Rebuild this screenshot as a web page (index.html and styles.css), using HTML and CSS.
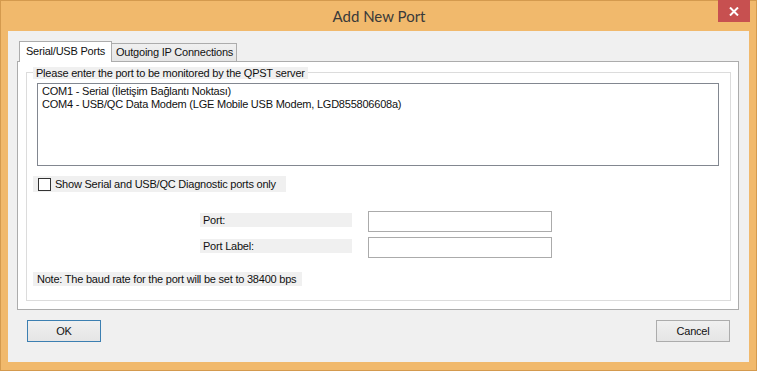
FILE: index.html
```html
<!DOCTYPE html>
<html>
<head>
<meta charset="utf-8">
<title>Add New Port</title>
<link rel="stylesheet" href="styles.css">
</head>
<body>
<div class="window">
  <div class="titlebar">
    <span class="title">Add New Port</span>
    <div class="close"><svg width="10" height="9" viewBox="0 0 10 9"><path d="M1 0.5 L9 8.5 M9 0.5 L1 8.5" stroke="#fff" stroke-width="2"/></svg></div>
  </div>
  <div class="client">
    <div class="tabs">
      <div class="tabstrip">
        <div class="tab active">Serial/USB Ports</div>
        <div class="tab">Outgoing IP Connections</div>
      </div>
      <div class="panel">
        <div class="group">
          <div class="legend">Please enter the port to be monitored by the QPST server</div>
          <div class="list">
            <div class="item">COM1 - Serial (İletişim Bağlantı Noktası)</div>
            <div class="item">COM4 - USB/QC Data Modem (LGE Mobile USB Modem, LGD855806608a)</div>
          </div>
          <div class="check-row">
            <span class="box"></span>
            <span class="check-label">Show Serial and USB/QC Diagnostic ports only</span>
          </div>
          <div class="field-row first">
            <span class="field-label">Port:</span>
            <span class="input"></span>
          </div>
          <div class="field-row">
            <span class="field-label">Port Label:</span>
            <span class="input"></span>
          </div>
          <div class="note">Note: The baud rate for the port will be set to 38400 bps</div>
        </div>
      </div>
    </div>
    <div class="buttons">
      <div class="btn default">OK</div>
      <div class="btn">Cancel</div>
    </div>
  </div>
</div>
</body>
</html>
```
FILE: styles.css
```css
* { box-sizing: border-box; }
html, body { margin: 0; padding: 0; background: #f1b96c; }
body { font-family: "Liberation Sans", Arial, sans-serif; font-size: 11px; letter-spacing: -0.22px; color: #111; }

.window {
  width: 757px;
  height: 371px;
  background: #f1b96c;
  border: 1px solid #d49a4e;
  display: flex;
  flex-direction: column;
}

.titlebar {
  height: 30px;
  position: relative;
  display: flex;
  justify-content: center;
  align-items: center;
}
.title {
  font-family: "Lato", "Open Sans", sans-serif;
  font-size: 15px;
  letter-spacing: 0;
  color: #3a3a3a;
  margin-top: -1px;
  margin-left: 1px;
}
.close {
  position: absolute;
  top: -1px;
  right: 6px;
  width: 32px;
  height: 22px;
  background: #c75050;
  display: flex;
  align-items: center;
  justify-content: center;
}

.client {
  margin: 0 7px 8px 7px;
  flex: 1;
  background: #f0f0f0;
  display: flex;
  flex-direction: column;
}

.tabs { margin: 10px 0 0 9px; width: 722px; }
.tabstrip { display: flex; align-items: flex-end; padding-left: 2px; height: 20px; }
.tab {
  height: 18px;
  border: 1px solid #acacac;
  border-bottom: none;
  background: linear-gradient(#f0f0f0, #e5e5e5);
  padding: 0 3px 0 4px;
  line-height: 17px;
  white-space: nowrap;
  margin-left: -1px;
}
.tab.active {
  height: 21px;
  margin-bottom: -1px;
  background: #fff;
  position: relative;
  z-index: 1;
  padding: 0 6px 0 6px;
  line-height: 19px;
  margin-left: 0;
}
.panel {
  height: 249px;
  border: 1px solid #acacac;
  background: #fff;
  padding: 10px 7px 0 8px;
}
.group {
  position: relative;
  height: 229px;
  border: 1px solid #dcdcdc;
  padding: 10px 0 0 0;
}
.legend {
  position: absolute;
  left: 6px;
  top: -6px;
  height: 12px;
  line-height: 12px;
  background: #f0f0f0;
  padding: 0 3px;
  white-space: nowrap;
}
.list {
  margin-left: 10px;
  width: 682px;
  height: 83px;
  border: 1px solid #828790;
  background: #fff;
  padding: 1px 0 0 4px;
}
.item { height: 13px; line-height: 13px; white-space: nowrap; }

.check-row {
  margin: 10px 0 0 6px;
  width: 253px;
  height: 16px;
  background: #f0f0f0;
  display: flex;
  align-items: center;
}
.box {
  width: 13px;
  height: 13px;
  border: 1px solid #333;
  background: #fff;
  margin-left: 5px;
}
.check-label { margin-left: 4px; white-space: nowrap; }

.field-row {
  display: flex;
  align-items: flex-start;
  margin: 5px 0 0 173px;
}
.field-row.first { margin-top: 19px; }
.field-label {
  width: 152px;
  height: 14px;
  line-height: 14px;
  margin-top: 2px;
  background: #f0f0f0;
  padding-left: 3px;
}
.input {
  width: 184px;
  height: 21px;
  margin-left: 16px;
  border: 1px solid #ababab;
  background: #fff;
}
.note {
  margin: 14px 0 0 6px;
  width: 269px;
  height: 14px;
  line-height: 14px;
  background: #f0f0f0;
  padding-left: 4px;
  white-space: nowrap;
}

.buttons {
  display: flex;
  justify-content: space-between;
  margin: 10px 19px 0 19px;
}
.btn {
  width: 74px;
  height: 22px;
  border: 1px solid #acacac;
  background: linear-gradient(#f0f0f0, #e5e5e5);
  text-align: center;
  line-height: 20px;
  font-size: 11px;
}
.btn.default { border-color: #3c7fb1; }
```
